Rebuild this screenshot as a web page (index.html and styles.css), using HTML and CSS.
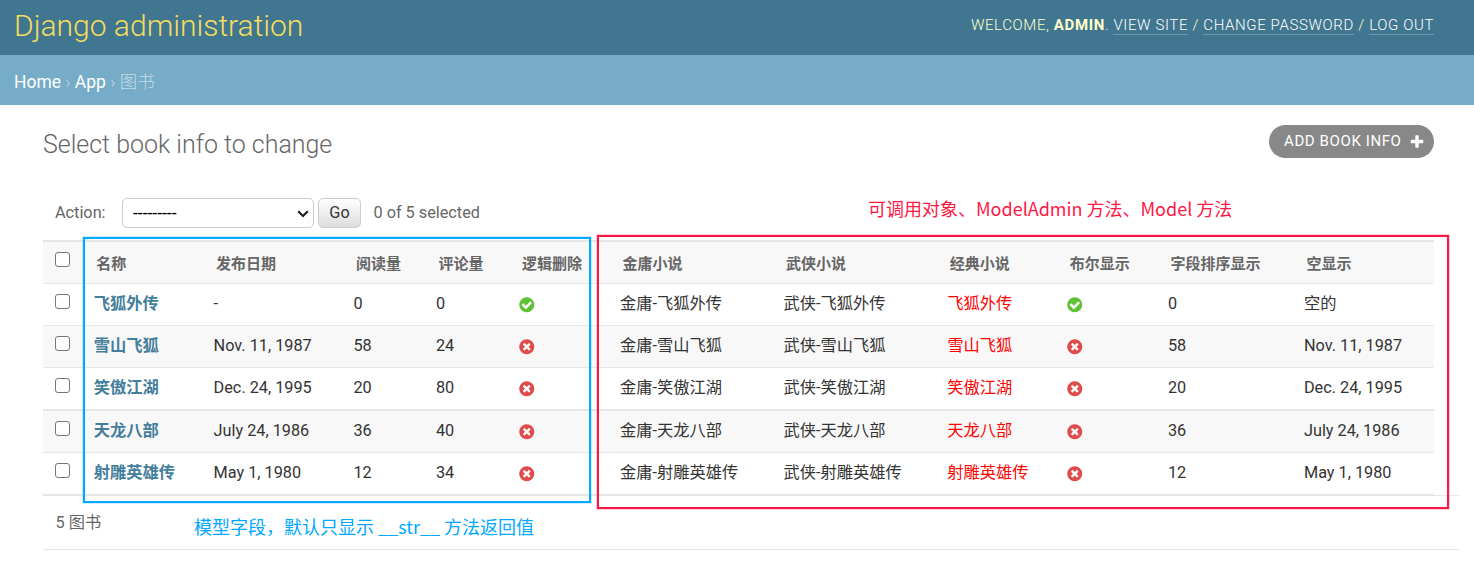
FILE: index.html
```
<!DOCTYPE html>
<html lang="zh-CN">
<head>
<meta charset="utf-8">
<title>Select book info to change | Django site admin</title>
<link rel="stylesheet" href="styles.css">
</head>
<body>
<svg class="sprite" aria-hidden="true">
  <symbol id="yes" viewBox="0 0 1792 1792"><path fill="#5fc135" d="M1412 734q0-28-18-46l-91-90q-19-19-45-19t-45 19l-408 407-226-226q-19-19-45-19t-45 19l-91 90q-18 18-18 46 0 27 18 45l362 362q19 19 45 19 27 0 46-19l543-543q18-18 18-45zm252 162q0 209-103 385.500t-279.500 279.500-385.500 103-385.500-103-279.500-279.500-103-385.500 103-385.500 279.500-279.500 385.500-103 385.500 103 279.500 279.500 103 385.500z"/></symbol>
  <symbol id="no" viewBox="0 0 1792 1792"><path fill="#e04b4b" d="M1277 1122q0-26-19-45l-181-181 181-181q19-19 19-45 0-27-19-46l-90-90q-19-19-46-19-26 0-45 19l-181 181-181-181q-19-19-45-19-27 0-46 19l-90 90q-19 19-19 46 0 26 19 45l181 181-181 181q-19 19-19 45 0 27 19 46l90 90q19 19 46 19 26 0 45-19l181-181 181 181q19 19 45 19 27 0 46-19l90-90q19-19 19-46zm387-226q0 209-103 385.500t-279.500 279.500-385.500 103-385.500-103-279.500-279.500-103-385.500 103-385.500 279.500-279.500 385.500-103 385.500 103 279.500 279.500 103 385.500z"/></symbol>
</svg>
<header class="header">
  <h1 class="site-name">Django administration</h1>
  <div class="user-tools">Welcome, <strong>admin</strong>. <a>View site</a> / <a>Change password</a> / <a>Log out</a></div>
</header>
<nav class="breadcrumbs"><a>Home</a> › <a>App</a> › 图书</nav>
<main class="content">
  <div class="title-row">
    <h2 class="title">Select book info to change</h2>
    <a class="addlink">Add book info
      <svg class="plus" viewBox="0 0 1792 1792"><path fill="#fff" d="M1600 736v192q0 40-28 68t-68 28h-416v416q0 40-28 68t-68 28h-192q-40 0-68-28t-28-68v-416h-416q-40 0-68-28t-28-68v-192q0-40 28-68t68-28h416v-416q0-40 28-68t68-28h192q40 0 68 28t28 68v416h416q40 0 68 28t28 68z"/></svg>
    </a>
  </div>
  <div class="actions">
    <label class="action-label">Action:</label>
    <span class="select-wrap">
      <select class="select"><option>---------</option></select>
      <svg class="chevron" viewBox="0 0 12 8"><path d="M1.200 1.200 6 6 10.800 1.200" fill="none" stroke="#222" stroke-width="2.200"/></svg>
    </span>
    <button class="go">Go</button>
    <span class="counter">0 of 5 selected</span>
  </div>
  <div class="list">
    <div class="row head">
      <span><input type="checkbox" class="check"></span><span>名称</span><span>发布日期</span><span>阅读量</span><span>评论量</span><span>逻辑删除</span><span>金庸小说</span><span>武侠小说</span><span>经典小说</span><span>布尔显示</span><span>字段排序显示</span><span>空显示</span>
    </div>
    <div class="row">
      <span><input type="checkbox" class="check"></span><a class="name">飞狐外传</a><span>-</span><span>0</span><span>0</span><span><svg class="flag"><use href="#yes"/></svg></span><span>金庸-飞狐外传</span><span>武侠-飞狐外传</span><span class="red">飞狐外传</span><span><svg class="flag"><use href="#yes"/></svg></span><span>0</span><span>空的</span>
    </div>
    <div class="row alt">
      <span><input type="checkbox" class="check"></span><a class="name">雪山飞狐</a><span>Nov. 11, 1987</span><span>58</span><span>24</span><span><svg class="flag"><use href="#no"/></svg></span><span>金庸-雪山飞狐</span><span>武侠-雪山飞狐</span><span class="red">雪山飞狐</span><span><svg class="flag"><use href="#no"/></svg></span><span>58</span><span>Nov. 11, 1987</span>
    </div>
    <div class="row thick">
      <span><input type="checkbox" class="check"></span><a class="name">笑傲江湖</a><span>Dec. 24, 1995</span><span>20</span><span>80</span><span><svg class="flag"><use href="#no"/></svg></span><span>金庸-笑傲江湖</span><span>武侠-笑傲江湖</span><span class="red">笑傲江湖</span><span><svg class="flag"><use href="#no"/></svg></span><span>20</span><span>Dec. 24, 1995</span>
    </div>
    <div class="row alt">
      <span><input type="checkbox" class="check"></span><a class="name">天龙八部</a><span>July 24, 1986</span><span>36</span><span>40</span><span><svg class="flag"><use href="#no"/></svg></span><span>金庸-天龙八部</span><span>武侠-天龙八部</span><span class="red">天龙八部</span><span><svg class="flag"><use href="#no"/></svg></span><span>36</span><span>July 24, 1986</span>
    </div>
    <div class="row">
      <span><input type="checkbox" class="check"></span><a class="name">射雕英雄传</a><span>May 1, 1980</span><span>12</span><span>34</span><span><svg class="flag"><use href="#no"/></svg></span><span>金庸-射雕英雄传</span><span>武侠-射雕英雄传</span><span class="red">射雕英雄传</span><span><svg class="flag"><use href="#no"/></svg></span><span>12</span><span>May 1, 1980</span>
    </div>
  </div>
  <p class="paginator">5 图书</p>
</main>
<div class="frame frame-fields"></div>
<div class="frame frame-methods"></div>
<div class="note note-methods">可调用对象、ModelAdmin 方法、Model 方法</div>
<div class="note note-fields">模型字段，默认只显示 __str__ 方法返回值</div>
</body>
</html>
```
FILE: styles.css
```
* { box-sizing: border-box; }
body {
  margin: 0;
  position: relative;
  height: 580px;
  overflow: hidden;
  background: #fff;
  color: #333;
  font: 16.25px/20px Roboto, "Noto Sans CJK SC", sans-serif;
}
.sprite { position: absolute; width: 0; height: 0; }
.header {
  display: flex;
  justify-content: space-between;
  height: 55px;
  padding: 0 40px 0 14px;
  background: #417690;
  color: #ffc;
}
.site-name {
  margin: 0;
  padding-top: 8px;
  font-size: 30px;
  font-weight: 300;
  line-height: 36px;
  color: #f5dd5d;
}
.user-tools {
  padding-top: 15px;
  font-size: 15px;
  font-weight: 300;
  letter-spacing: 0.625px;
  text-transform: uppercase;
}
.user-tools strong { font-weight: 700; }
.user-tools a { color: #fff; border-bottom: 1px solid rgba(255, 255, 255, 0.25); }
.breadcrumbs {
  height: 50px;
  padding: 17px 14px 0;
  background: #76acc8;
  color: #c4dce8;
  font-size: 17.5px;
  font-weight: 300;
}
.breadcrumbs a { color: #fff; font-weight: 400; }
.content { padding: 20px 15px 0 43px; }
.title-row {
  display: flex;
  justify-content: space-between;
  height: 78px;
  margin-right: 25px;
}
.title {
  margin: 4px 0 0;
  font-size: 24.96px;
  font-weight: 300;
  line-height: 32px;
  color: #666;
}
.addlink {
  display: flex;
  align-items: flex-start;
  justify-content: space-between;
  width: 165px;
  height: 33px;
  padding: 6px 9px 0 15px;
  border-radius: 17px;
  background: #888;
  color: #fff;
  font-size: 15px;
  letter-spacing: 0.6px;
  text-transform: uppercase;
}
.plus { width: 16px; height: 16px; margin-top: 3px; }
.actions {
  display: flex;
  align-items: flex-start;
  height: 37px;
  margin: -5px 0 0;
  padding-left: 12px;
  color: #666;
}
.action-label { width: 67px; line-height: 30px; }
.select-wrap { position: relative; width: 192px; height: 30px; margin-right: 4px; }
.select {
  appearance: none;
  width: 192px;
  height: 30px;
  padding: 0 10px;
  border: 1px solid #ccc;
  border-radius: 5px;
  background: #fff;
  color: #000;
  font: 17.500px Roboto, sans-serif;
}
.chevron { position: absolute; right: 5px; top: 12px; width: 12px; height: 8px; }
.go {
  width: 43px;
  height: 30px;
  margin-right: 12.5px;
  padding: 0 0 2px;
  border: 1px solid #ccc;
  border-radius: 5px;
  background: linear-gradient(#fff, #ddd);
  color: #333;
  font: 16.25px Roboto, sans-serif;
}
.counter { line-height: 30px; }
.list { width: 1391px; margin-top: 5px; }
.row {
  display: grid;
  grid-template-columns: 40.8px 119.8px 139.900px 82.500px 83.500px 100.500px 163.600px 163.600px 120.200px 100.600px 136px 140px;
  height: 42px;
  border-bottom: 1px solid #e6e6e6;
}
.row > * { padding: 10px 0 0 10px; white-space: nowrap; }
.row.thick { height: 43px; border-bottom-width: 2px; }
.row.head {
  height: 44px;
  border-top: 2px solid #e6e6e6;
  background: #f8f8f8;
  color: #666;
  font-size: 15px;
  font-weight: 700;
}
.row.head > * { padding: 12px 0 0 12.500px; }
.row.alt { background: #f8f8f8; }
.row > :first-child, .row.head > :first-child { padding: 10px 0 0 12px; line-height: 0; }
.name { color: #447e9b; font-weight: 700; }
.red { color: #f00; }
.check {
  appearance: none;
  width: 15px;
  height: 15px;
  margin: 0;
  border: 1px solid #767676;
  border-radius: 3px;
  background: #fff;
}
.flag { display: block; width: 17.500px; height: 17.500px; margin: 2px 0 0 -1px; }
.paginator {
  height: 55px;
  margin: 0;
  padding: 17px 12.500px 0;
  border-top: 1px solid #e6e6e6;
  border-bottom: 1px solid #e6e6e6;
  color: #666;
}
.frame { position: absolute; border: 2px solid; }
.frame-fields {
  left: 83px; top: 237px; width: 508px; height: 266px;
  border-color: #00a8ff;
  box-shadow: 0 0 0 1px #00a8ff33;
}
.frame-methods {
  left: 597px; top: 235px; width: 852px; height: 274px;
  border-color: #ff1744;
  box-shadow: 0 0 0 1px #ff174433;
}
.note {
  position: absolute;
  font: 18px/26px "Noto Sans CJK SC", sans-serif;
  white-space: nowrap;
}
.note-methods { left: 868px; top: 195px; color: #ff1744; }
.note-fields { left: 194px; top: 513px; color: #00a8ff; }
```
